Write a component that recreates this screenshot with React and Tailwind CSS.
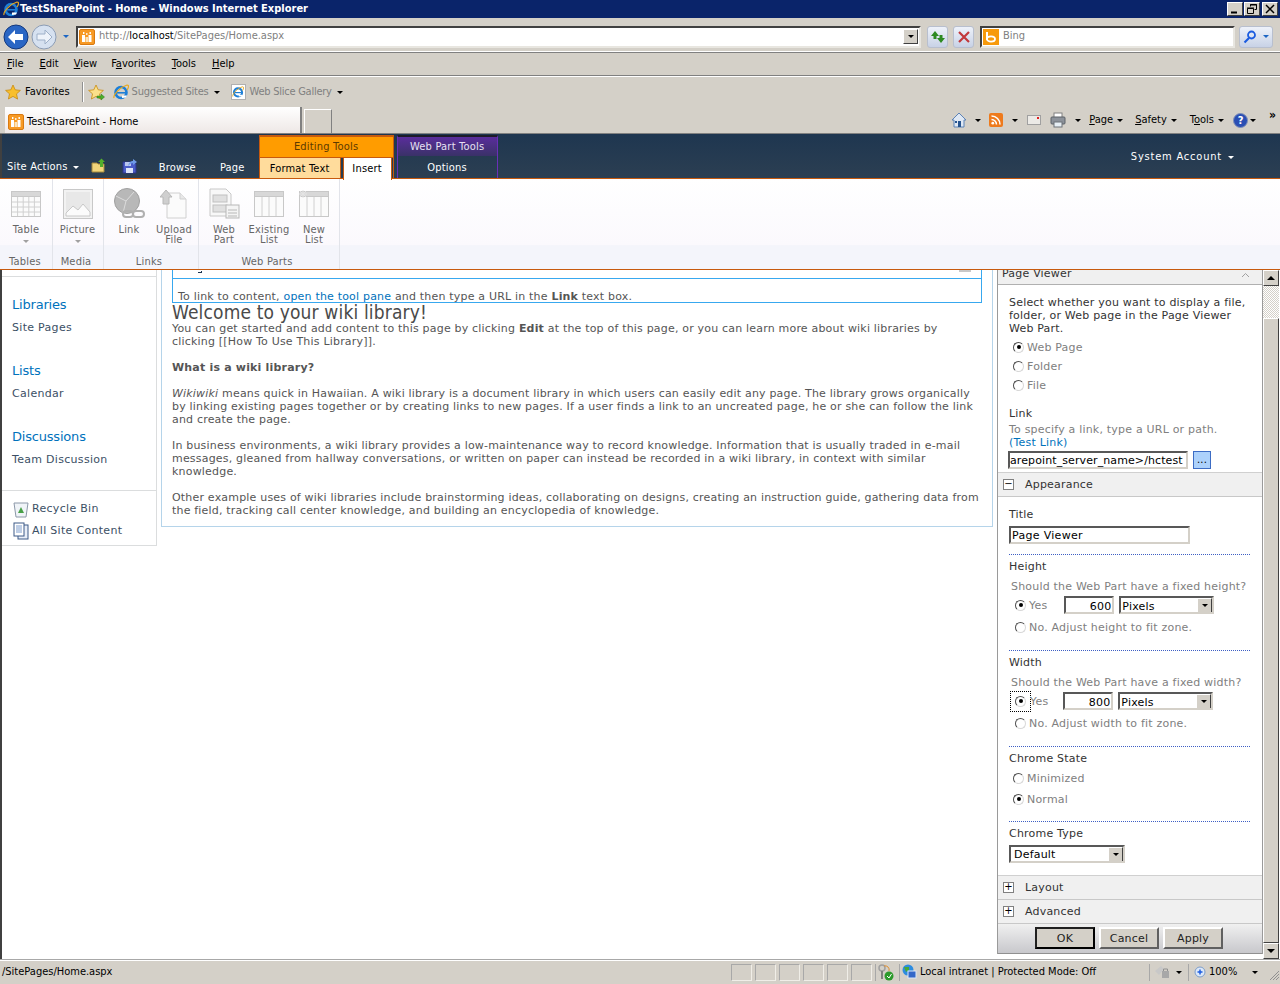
const ui = { fontFamily: '"DejaVu Sans Condensed", "Liberation Sans", sans-serif' };

function IeLogo({ size = 16 }) {
  return (
    <svg width={size} height={size} viewBox="0 0 16 16" className="shrink-0">
      <circle cx="8" cy="8.5" r="5.5" fill="none" stroke="#1d7fd8" strokeWidth="2.6" />
      <path d="M3 8h10v1.6H3z" fill="#1d7fd8" />
      <path d="M9 11.5h5l-1 2-4 .5z" fill="#fff" />
      <path d="M1 14c-1-3 6-11 13-13 2 0 2 2 0 5" fill="none" stroke="#e8a81c" strokeWidth="1.2" />
    </svg>
  );
}

function SiteIcon() {
  return (
    <svg width="16" height="16" viewBox="0 0 16 16" className="shrink-0">
      <rect x="0.5" y="0.5" width="15" height="15" rx="1.5" fill="#f79a24" stroke="#d97a10" />
      <rect x="3" y="6" width="3" height="7" fill="#fff" />
      <rect x="9.5" y="6" width="3" height="7" fill="#fff" />
      <rect x="6.5" y="8" width="2.5" height="5" fill="#fde3b8" />
      <rect x="4" y="3" width="1.4" height="2" fill="#fff" />
      <rect x="10.5" y="3" width="1.4" height="2" fill="#fff" />
      <rect x="7.2" y="4" width="1.2" height="2" fill="#fff" />
    </svg>
  );
}

function StarIcon({ add }) {
  return (
    <svg width="17" height="17" viewBox="0 0 17 17" className="shrink-0">
      <path d="M8 1l2.2 4.8 5.2.6-3.9 3.5 1.1 5.2L8 12.4 3.4 15l1.1-5.2L.6 6.4l5.2-.6z" fill={add ? "#fbe08a" : "#f8bf2c"} stroke="#c88a12" strokeWidth="0.8" />
      {add && <path d="M9 12h4v-2l3.5 3-3.5 3v-2H9z" fill="#4caf2a" stroke="#2d7a14" strokeWidth="0.5" />}
    </svg>
  );
}

function Caret({ color = "#000" }) {
  return <span className="block w-0 h-0 border-x-[3px] border-x-transparent border-t-[3px]" style={{ borderTopColor: color }} />;
}

function ComboArrow() {
  return (
    <span className="w-[15px] h-[15px] bg-[#d4d0c8] border border-t-white border-l-white border-r-[#404040] border-b-[#404040] flex items-center justify-center shrink-0">
      <Caret />
    </span>
  );
}

function WinBtn({ children, ml }) {
  return (
    <span className="w-[16px] h-[14px] bg-[#d4d0c8] border border-t-white border-l-white border-r-[#404040] border-b-[#404040] flex items-center justify-center" style={{ marginLeft: ml }}>
      {children}
    </span>
  );
}

function TitleBar() {
  return (
    <div className="h-[18px] bg-[#0a246a] flex items-center pl-[3px] pr-[2px]">
      <IeLogo />
      <span className="ml-[1px] text-white font-bold text-[11px] whitespace-nowrap" style={ui}>
        TestSharePoint - Home - Windows Internet Explorer
      </span>
      <div className="ml-auto flex">
        <WinBtn><svg width="10" height="10" viewBox="0 0 10 10"><path d="M1 8.500h6" stroke="#000" strokeWidth="2" /></svg></WinBtn>
        <WinBtn ml={1}><svg width="10" height="10" viewBox="0 0 10 10"><path d="M3.500 2.500v-2h6v5h-2M0.500 4.500h6v5h-6z" fill="none" stroke="#000" /><path d="M3 1h7M0 4h7" stroke="#000" /></svg></WinBtn>
        <WinBtn ml={2}><svg width="10" height="10" viewBox="0 0 10 10"><path d="M1 1l8 8M9 1L1 9" stroke="#000" strokeWidth="1.500" /></svg></WinBtn>
      </div>
    </div>
  );
}

function NavBall({ left, dim }) {
  return (
    <svg width="26" height="26" viewBox="0 0 26 26" className="shrink-0">
      <circle cx="13" cy="13" r="12" fill={dim ? "#d6e1f0" : "#2a66c4"} stroke={dim ? "#8c9cb4" : "#14387c"} />
      <path d={left ? "M5 13l7-7v4h8v6h-8v4z" : "M21 13l-7-7v4H6v6h8v4z"} fill={dim ? "#eef3fa" : "#fff"} stroke={dim ? "#9eb0c8" : "none"} />
    </svg>
  );
}

function SmallToolBtn({ children }) {
  return (
    <span className="w-[21px] h-[22px] rounded-[3px] bg-gradient-to-b from-[#eef2fa] to-[#c8d2e6] border border-[#b8bfce] flex items-center justify-center shrink-0">
      {children}
    </span>
  );
}

function AddressBar() {
  return (
    <div className="h-[34px] bg-[#d4d0c8] border-b border-b-white shadow-[0_1px_0_#808080] flex items-center pl-[3px] pt-[4px]">
      <NavBall left />
      <span className="ml-[2px]"><NavBall dim /></span>
      <span className="ml-[6px]"><Caret color="#1c66c4" /></span>
      <div className="ml-[7px] w-[845px] h-[22px] bg-white border-2 border-t-[#404040] border-l-[#404040] border-r-[#e8e6e0] border-b-[#e8e6e0] flex items-center px-[1px]">
        <SiteIcon />
        <span className="ml-[4px] text-[11px] text-[#808080] whitespace-nowrap" style={ui}>
          http://<span className="text-black">localhost</span>/SitePages/Home.aspx
        </span>
        <span className="ml-auto"><ComboArrow /></span>
      </div>
      <div className="ml-[6px] flex gap-[5px]">
        <SmallToolBtn>
          <svg width="16" height="14" viewBox="0 0 16 14"><path d="M5 1L1 6h2.500v3H6.500V6H9z" fill="#2d8a22" /><path d="M11 13l4-5h-2.500V5H9.500v3H7z" fill="#2d8a22" /></svg>
        </SmallToolBtn>
        <SmallToolBtn>
          <svg width="12" height="12" viewBox="0 0 12 12"><path d="M1 1l10 10M11 1L1 11" stroke="#c2383c" strokeWidth="2.2" /></svg>
        </SmallToolBtn>
      </div>
      <div className="ml-[6px] w-[255px] h-[22px] bg-white border-2 border-t-[#404040] border-l-[#404040] border-r-[#e8e6e0] border-b-[#e8e6e0] flex items-center pl-[1px]">
        <span className="w-[16px] h-[16px] bg-[#f79a0c] flex items-center justify-center">
          <svg width="12" height="12" viewBox="0 0 12 12"><path d="M2 1v8" stroke="#fff" strokeWidth="2" /><ellipse cx="6" cy="8" rx="4" ry="2.600" fill="none" stroke="#fff" strokeWidth="1.800" /></svg>
        </span>
        <span className="ml-[4px] text-[11px] text-[#808080]" style={ui}>Bing</span>
      </div>
      <div className="ml-[4px] w-[34px] h-[22px] rounded-[3px] bg-gradient-to-b from-[#eef2fa] to-[#c8d2e6] border border-[#b8bfce] flex items-center">
        <span className="w-[21px] flex justify-center">
          <svg width="14" height="14" viewBox="0 0 14 14"><circle cx="8.500" cy="5" r="3.500" fill="none" stroke="#1c5ce0" strokeWidth="1.800" /><path d="M6 8l-4.500 4.500" stroke="#1c5ce0" strokeWidth="2.200" /></svg>
        </span>
        <span className="w-[12px] flex justify-center"><Caret color="#1c66c4" /></span>
      </div>
    </div>
  );
}

function MenuBar() {
  const items = [["F", "ile", 7], ["E", "dit", 16], ["V", "iew", 15], ["Favorites", "", 14], ["T", "ools", 16], ["H", "elp", 16]];
  return (
    <div className="h-[23px] bg-[#d4d0c8] flex items-center pl-[7px] pt-[1px] mt-px border-b border-b-[#808080] text-[11px] text-black" style={ui}>
      {items.map(([u, rest, gap], i) => (
        <span key={u} style={{ marginLeft: i === 0 ? 0 : gap }} className="whitespace-nowrap">
          {u === "Favorites" ? <>F<span className="underline">a</span>vorites</> : <><span className="underline">{u}</span>{rest}</>}
        </span>
      ))}
    </div>
  );
}

function FavBar() {
  return (
    <div className="h-[31px] bg-[#d4d0c8] border-t border-t-white flex items-center pl-[5px] text-[11px] whitespace-nowrap" style={ui}>
      <StarIcon />
      <span className="ml-[3px] text-black">Favorites</span>
      <span className="ml-[12px] w-[2px] h-[20px] bg-[#909090] border-r border-r-white" />
      <span className="ml-[4px]"><StarIcon add /></span>
      <span className="ml-[8px]"><IeLogo /></span>
      <span className="ml-[3px] text-[#808080] tracking-[-0.2px]">Suggested Sites</span>
      <span className="ml-[5px]"><Caret /></span>
      <span className="ml-[11px] w-[15px] h-[16px] bg-white border border-[#b0b0b0] flex items-center justify-center"><IeLogo size={12} /></span>
      <span className="ml-[4px] text-[#808080] tracking-[-0.25px]">Web Slice Gallery</span>
      <span className="ml-[5px]"><Caret /></span>
    </div>
  );
}

function CmdBar() {
  return (
    <div className="h-[27px] bg-[#d4d0c8] border-b border-b-[#808080] flex items-end pl-[5px] text-[11px] text-black whitespace-nowrap" style={ui}>
      <div className="w-[297px] h-[26px] bg-gradient-to-b from-white to-[#eee8e6] border-r-2 border-r-[#808080] flex items-center pl-[3px] pt-[4px]">
        <SiteIcon />
        <span className="ml-[3px]">TestSharePoint - Home</span>
      </div>
      <div className="ml-[2px] w-[28px] h-[24px] border border-t-white border-l-white border-r-[#808080] border-b-0" />
      <div className="ml-auto flex items-center h-[24px] pr-[4px] pb-[2px]">
        <svg width="16" height="16" viewBox="0 0 16 16"><path d="M8 1L1 8h2v7h10V8h2z" fill="#dfe8f4" stroke="#5d83b6" /><rect x="7" y="9" width="3" height="6" fill="#26548f" /><rect x="4" y="9" width="2" height="2" fill="#26548f" /></svg>
        <span className="ml-[8px]"><Caret /></span>
        <span className="ml-[8px] w-[14px] h-[14px] rounded-[2px] bg-[#ee7a1c] flex items-center justify-center">
          <svg width="10" height="10" viewBox="0 0 10 10"><circle cx="1.800" cy="8.200" r="1.400" fill="#fff" /><path d="M0.500 4.500a5 5 0 0 1 5 5M0.500 1a8.500 8.500 0 0 1 8.500 8.500" fill="none" stroke="#fff" strokeWidth="1.500" /></svg>
        </span>
        <span className="ml-[9px]"><Caret /></span>
        <span className="ml-[9px] w-[14px] h-[10px] bg-[#eceae6] border border-[#a0a0a0] relative"><span className="absolute right-[1px] top-[1px] w-[2px] h-[2px] bg-[#e02020]" /></span>
        <span className="ml-[9px]">
          <svg width="16" height="16" viewBox="0 0 16 16"><rect x="4" y="1" width="8" height="5" fill="#fff" stroke="#808080" /><rect x="1" y="5" width="14" height="7" rx="1" fill="#8c929a" stroke="#5c6268" /><rect x="4" y="10" width="8" height="5" fill="#e6eef4" stroke="#6c7278" /></svg>
        </span>
        <span className="ml-[9px]"><Caret /></span>
        <span className="ml-[8px]"><span className="underline">P</span>age</span>
        <span className="ml-[4px]"><Caret /></span>
        <span className="ml-[12px]"><span className="underline">S</span>afety</span>
        <span className="ml-[4px]"><Caret /></span>
        <span className="ml-[13px]">T<span className="underline">o</span>ols</span>
        <span className="ml-[4px]"><Caret /></span>
        <span className="ml-[9px] w-[15px] h-[15px] rounded-full bg-[#2a4fb4] border border-[#8090b8] text-white font-bold text-[11px] leading-[14px] text-center">?</span>
        <span className="ml-[2px]"><Caret /></span>
        <span className="ml-[13px] mb-[10px] text-[12px] font-bold leading-none">»</span>
      </div>
    </div>
  );
}

function RibbonTabs() {
  return (
    <div className="h-[45px] bg-gradient-to-b from-[#1e3650] to-[#2c3f52] flex items-end text-[11px] tracking-[0.2px] text-white whitespace-nowrap" style={ui}>
      <div className="w-[2px] h-full bg-[#404040]" />
      <div className="flex items-center h-[22px] pl-[5px] mb-[1px]">
        Site Actions<span className="ml-[5px]"><Caret color="#fff" /></span>
      </div>
      <span className="ml-[12px] mb-[5px]">
        <svg width="16" height="16" viewBox="0 0 16 16"><path d="M1 5h5l1 1h6v8H1z" fill="#f2d67a" stroke="#a48a3c" /><path d="M9 9V4H7l3.500-3.500L14 4h-2v5z" fill="#52ae2c" /></svg>
      </span>
      <span className="ml-[15px] mb-[5px]">
        <svg width="16" height="16" viewBox="0 0 16 16"><path d="M1 4h11l2 2v9H1z" fill="#4a5cc8" stroke="#2a3488" /><rect x="4" y="10" width="7" height="5" fill="#dce4f8" /><rect x="3" y="4" width="6" height="4" fill="#b8c6f0" /><path d="M6 8c1-4 3-5 5-5V1l4 3-4 3V5c-2 0-3 1-5 3z" fill="#6e9ae8" /></svg>
      </span>
      <span className="ml-[21px] h-[22px] leading-[22px]">Browse</span>
      <span className="ml-[24px] h-[22px] leading-[22px]">Page</span>
      <div className="ml-[14px] w-[135px] h-[44px] border-t-2 border-x border-[#c75a0e] flex flex-col">
        <div className="h-[20px] bg-[#ff9c00] text-[#5c3a00] text-center leading-[19px]">Editing Tools</div>
        <div className="flex-1 flex border-t border-t-[#c75a0e]">
          <div className="w-[81px] bg-[#ffdc9c] text-black text-center leading-[21px] border-r border-r-[#c75a0e]">Format Text</div>
          <div className="ml-[2px] w-[49px] bg-white text-black text-center leading-[21px] border-x border-x-[#c75a0e] relative z-10 -mb-[1px]">Insert</div>
        </div>
      </div>
      <div className="ml-[3px] w-[101px] h-[44px] border-t-2 border-x border-t-[#1c1c28] border-x-[#6a2fb8] flex flex-col">
        <div className="h-[20px] bg-gradient-to-b from-[#5a2c9c] to-[#3a3168] text-[#e8e0f4] text-center leading-[19px]">Web Part Tools</div>
        <div className="flex-1 text-center leading-[23px]">Options</div>
      </div>
      <div className="ml-auto self-center pr-[46px] pt-[2px] flex items-center">
        <span className="tracking-[0.8px]">System Account</span><span className="ml-[6px]"><Caret color="#fff" /></span>
      </div>
    </div>
  );
}

function RibbonBtn({ w, icon, label, line2, caret }) {
  return (
    <div className="flex flex-col items-center shrink-0" style={{ width: w }}>
      <div className="h-[33px] shrink-0 flex items-center justify-center">{icon}</div>
      <div className="mt-[5px] shrink-0 text-center leading-[10px] text-[#666] whitespace-nowrap">
        {label}
        {line2 && <div>{line2}</div>}
      </div>
      {caret && <span className="mt-[5px] shrink-0"><Caret color="#a0a0a0" /></span>}
    </div>
  );
}

function GridIcon({ cols = 4, rows = 3, spark }) {
  const vs = Array.from({ length: cols - 1 }, (_, i) => 1 + ((i + 1) * 28) / cols);
  const hs = Array.from({ length: rows - 1 }, (_, i) => 7 + ((i + 1) * 20) / rows);
  return (
    <svg width="30" height="28" viewBox="0 0 30 28">
      <rect x="0.500" y="1.500" width="29" height="25" fill="#fbfbfb" stroke="#c8c8c8" />
      <rect x="0.500" y="1.500" width="29" height="5" fill="#d8d8d8" stroke="#c8c8c8" />
      {vs.map((x) => <path key={x} d={`M${x} 7v19`} stroke="#d0d0d0" />)}
      {hs.map((y) => <path key={y} d={`M1 ${y}h28`} stroke="#d0d0d0" />)}
      {spark && <path d="M4 0v8M0 4h8M1 1l6 6M7 1L1 7" stroke="#e4e4e4" strokeWidth="1" />}
    </svg>
  );
}

function Group({ w, label, children }) {
  return (
    <div className="flex flex-col border-r border-r-[#e2e4ea] shrink-0" style={{ width: w }}>
      <div className="h-[66px] flex pt-[8px]">{children}</div>
      <div className="h-[23px] pt-[10px] pr-[4px] leading-[14px] text-center text-[#666]">{label}</div>
    </div>
  );
}

function Ribbon() {
  return (
    <div className="h-[92px] -mt-px border-y border-y-[#c75a0e] bg-[linear-gradient(#fff_0,#fbf9fd_73%,#f4f5fb_74%,#f4f5fb_100%)] flex pl-[2px] text-[11px] tracking-[0.2px]" style={ui}>
      <Group w={51} label="Tables">
        <RibbonBtn w={48} icon={<GridIcon cols={5} rows={4} />} label="Table" caret />
      </Group>
      <Group w={51} label="Media">
        <RibbonBtn w={49} caret label="Picture" icon={
          <svg width="30" height="30" viewBox="0 0 30 30"><rect x="0.500" y="0.500" width="29" height="29" fill="#f2f2f2" stroke="#c8c8c8" /><rect x="3" y="3" width="24" height="24" fill="#e8e8e8" /><path d="M3 24l7-7 5 4 5-6 7 8v4H3z" fill="#fbfbfb" stroke="#c8c8c8" /></svg>
        } />
      </Group>
      <Group w={95} label="Links">
        <RibbonBtn w={50} label="Link" icon={
          <svg width="32" height="32" viewBox="0 0 32 32"><circle cx="14" cy="13" r="12.500" fill="#b8b8b8" stroke="#a0a0a0" /><path d="M3 8l10 5 8-9M13 13l-3 12" stroke="#dcdcdc" fill="none" /><rect x="10" y="23" width="10" height="6" rx="3" fill="none" stroke="#b0b0b0" strokeWidth="2" /><rect x="20" y="23" width="11" height="6" rx="3" fill="none" stroke="#b0b0b0" strokeWidth="2" /></svg>
        } />
        <RibbonBtn w={40} label="Upload" line2="File" icon={
          <svg width="28" height="30" viewBox="0 0 28 30"><path d="M7 4h13l6 6v19H7z" fill="#fbfbfb" stroke="#d0d0d0" /><path d="M20 4v6h6" fill="#e8e8e8" stroke="#d0d0d0" /><path d="M0 8l6-7 6 7H9v7H3V8z" fill="#cfcfcf" stroke="#b8b8b8" /></svg>
        } />
      </Group>
      <Group w={141} label="Web Parts">
        <RibbonBtn w={50} label="Web" line2="Part" icon={
          <svg width="31" height="31" viewBox="0 0 31 31"><path d="M1 1h16l5 5v22H1z" fill="#f8f8f8" stroke="#c8c8c8" /><rect x="4" y="7" width="14" height="7" fill="#e0e0e0" stroke="#c0c0c0" /><rect x="4" y="17" width="14" height="7" fill="#e0e0e0" stroke="#c0c0c0" /><rect x="17" y="17" width="13" height="13" fill="#f4f4f4" stroke="#b8b8b8" /><path d="M19 22h9M19 25h9M19 28h9" stroke="#b8b8b8" /></svg>
        } />
        <RibbonBtn w={40} label="Existing" line2="List" icon={<GridIcon cols={4} rows={1} />} />
        <RibbonBtn w={50} label="New" line2="List" icon={<GridIcon cols={4} rows={1} spark />} />
      </Group>
    </div>
  );
}

function NavLink({ head, sub, mt }) {
  return (
    <div style={{ marginTop: mt }}>
      <div className="text-[13px] leading-[16px] tracking-[-0.2px] text-[#0072bc]">{head}</div>
      <div className="mt-[7px] text-[11px] leading-[16px] tracking-[0.3px] text-[#3b4f65]">{sub}</div>
    </div>
  );
}

function LeftNav() {
  return (
    <div className="w-[155px] h-[276px] shrink-0 border-r border-b border-[#dbddde] tracking-[0.3px] whitespace-nowrap">
      <div className="h-[7px] border-b border-b-[#dbddde]" />
      <div className="pl-[10px]">
        <NavLink head="Libraries" sub="Site Pages" mt={20} />
        <NavLink head="Lists" sub="Calendar" mt={27} />
        <NavLink head="Discussions" sub="Team Discussion" mt={27} />
      </div>
      <div className="mt-[22px] border-t border-t-[#dbddde] pt-[8px] pl-[11px] text-[11px] text-[#3b4f65]">
        <div className="flex items-center h-[20px]">
          <svg width="16" height="18" viewBox="0 0 16 18"><path d="M1 3h14l-2 14H3z" fill="#f0f4f8" stroke="#8c98a8" /><path d="M8 7l3 6H5z" fill="#48a048" /></svg>
          <span className="ml-[3px]">Recycle Bin</span>
        </div>
        <div className="mt-[2px] flex items-center h-[20px]">
          <svg width="16" height="18" viewBox="0 0 16 18"><rect x="5" y="3" width="10" height="14" fill="#e8eef8" stroke="#3c5a88" /><rect x="1" y="1" width="10" height="13" fill="#fff" stroke="#3c5a88" /><path d="M3 4h6M3 6h6M3 8h6M3 10h6" stroke="#7c9ccc" /></svg>
          <span className="ml-[3px]">All Site Content</span>
        </div>
      </div>
    </div>
  );
}

function Para({ lines, mt = 0 }) {
  return (
    <div style={{ marginTop: mt }}>
      {lines.map((l, i) => <div key={i} className="h-[13px] whitespace-nowrap">{l}</div>)}
    </div>
  );
}

function WikiBody() {
  return (
    <div className="ml-[4px] w-[832px] h-[257px] shrink-0 border-x border-b border-[#b5d4ea] pl-[10px] text-[11px] leading-[13px] text-[#555] tracking-[0.19px]">
      <div className="w-[810px] h-[33px] border-x border-b border-[#38a8ef] relative">
        <div className="h-[9px] border-b border-b-[#38a8ef]" />
        <span className="absolute left-[25px] top-[1px] w-[4px] h-[2px] border-r border-b border-[#1c3450]" />
        <span className="absolute left-[786px] top-0 w-[12px] h-[2px] bg-[#c8c8c8]" />
        <div className="absolute left-[5px] bottom-[-2px] h-[14px] whitespace-nowrap">
          To link to content, <span className="text-[#0072bc]">open the tool pane</span> and then type a URL in the <b>Link</b> text box.
        </div>
      </div>
      <div className="text-[19px] leading-[19px] tracking-[0.15px] whitespace-nowrap text-[#4a4a4a]" style={ui}>Welcome to your wiki library!</div>
      <Para lines={[
        <>You can get started and add content to this page by clicking <b>Edit</b> at the top of this page, or you can learn more about wiki libraries by</>,
        "clicking [[How To Use This Library]].",
      ]} />
      <Para mt={13} lines={[<b>What is a wiki library?</b>]} />
      <Para mt={13} lines={[
        <><i>Wikiwiki</i> means quick in Hawaiian. A wiki library is a document library in which users can easily edit any page. The library grows organically</>,
        "by linking existing pages together or by creating links to new pages. If a user finds a link to an uncreated page, he or she can follow the link",
        "and create the page.",
      ]} />
      <Para mt={13} lines={[
        "In business environments, a wiki library provides a low-maintenance way to record knowledge. Information that is usually traded in e-mail",
        "messages, gleaned from hallway conversations, or written on paper can instead be recorded in a wiki library, in context with similar",
        "knowledge.",
      ]} />
      <Para mt={13} lines={[
        "Other example uses of wiki libraries include brainstorming ideas, collaborating on designs, creating an instruction guide, gathering data from",
        "the field, tracking call center knowledge, and building an encyclopedia of knowledge.",
      ]} />
    </div>
  );
}

function Radio({ on, focus, label, x = 0, mt = 0 }) {
  return (
    <div className="h-[14px] flex items-center text-[#808080] whitespace-nowrap" style={{ marginLeft: x, marginTop: mt }}>
      <span className={focus ? "w-[19px] h-[19px] -ml-[4px] -mr-[3px] outline-1 outline-dotted outline-black flex items-center justify-center shrink-0" : "shrink-0"}>
        <span className="w-[11px] h-[11px] rounded-full block bg-white border border-t-[#505050] border-l-[#505050] border-r-[#d8d8d8] border-b-[#d8d8d8] relative">
          {on && <span className="absolute left-[2.500px] top-[2.500px] w-[4px] h-[4px] rounded-full bg-black" />}
        </span>
      </span>
      <span className="ml-[3px]">{label}</span>
    </div>
  );
}

function Sunken({ w, h = 17, right, children, mt, ml }) {
  return (
    <div className="shrink-0 bg-white border-2 border-t-[#585858] border-l-[#585858] border-r-[#d4d0c8] border-b-[#d4d0c8] flex items-center overflow-hidden text-black whitespace-nowrap" style={{ width: w, height: h, marginTop: mt, marginLeft: ml, justifyContent: right ? "flex-end" : "flex-start" }}>
      {children}
    </div>
  );
}

function SizeRow({ val, mt, ml }) {
  return (
    <div className="flex items-center" style={{ marginTop: mt, marginLeft: ml }}>
      <Sunken w={50} h={18} right><span className="pr-px mt-[2px]">{val}</span></Sunken>
      <Sunken w={95} h={18} ml={5}>
        <span className="pl-[1px] mt-[2px]">Pixels</span><span className="ml-auto"><ComboArrow /></span>
      </Sunken>
    </div>
  );
}

function Dots({ mt }) {
  return <div className="mx-[11px] w-[241px] border-t border-dotted border-t-[#3e5fc4]" style={{ marginTop: mt }} />;
}

function Head({ children, mt }) {
  return <div className="h-[14px] leading-[14px] ml-[11px] text-[#333]" style={{ marginTop: mt }}>{children}</div>;
}

function PaneRow({ sign, label, h = 24 }) {
  return (
    <div className="bg-[#f0f0f0] border-b border-b-[#c8c8c8] flex items-center pl-[5px] text-[#333]" style={{ height: h }}>
      <span className="w-[11px] h-[11px] border border-[#808080] bg-white text-[10px] leading-[8px] text-center text-black shrink-0" style={{ fontFamily: '"DejaVu Sans", sans-serif' }}>{sign}</span>
      <span className="ml-[11px]">{label}</span>
    </div>
  );
}

function ClassicBtn({ label, def }) {
  return (
    <div className={def ? "w-[60px] h-[22px] bg-[#d4d0c8] border-2 border-t-[#202020] border-l-[#202020] border-r-[#000] border-b-[#000] text-center leading-[19px] text-[#222]" : "w-[60px] h-[22px] bg-[#d4d0c8] border-2 border-t-white border-l-white border-r-[#606060] border-b-[#606060] text-center leading-[19px] text-[#222]"}>
      {label}
    </div>
  );
}

function ToolPane() {
  return (
    <div className="ml-[4px] w-[266px] shrink-0 self-start border-x border-x-[#9a9a9a] text-[11px] leading-[13px] tracking-[0.2px]">
      <div className="h-[15px] bg-[#f0f0f0] border-b border-b-[#b0b0b0] flex items-end pl-[4px] pr-[13px] overflow-hidden text-[#333]">
        <span className="mb-[4px]">Page Viewer</span>
        <svg className="ml-auto mb-[7px]" width="7" height="4" viewBox="0 0 7 4"><path d="M0 4l3.500-3.500L7 4" fill="none" stroke="#a0a0a0" /></svg>
      </div>
      <div className="pl-[11px] pt-[11px] text-[#333] whitespace-nowrap">
        <div className="h-[13px]">Select whether you want to display a file,</div>
        <div className="h-[13px]">folder, or Web page in the Page Viewer</div>
        <div className="h-[13px]">Web Part.</div>
      </div>
      <Radio on label="Web Page" x={15} mt={5} />
      <Radio label="Folder" x={15} mt={5} />
      <Radio label="File" x={15} mt={5} />
      <Head mt={15}>Link</Head>
      <div className="ml-[11px] mt-[2px] h-[13px] text-[#808080] whitespace-nowrap">To specify a link, type a URL or path.</div>
      <div className="ml-[11px] h-[13px] text-[#0072bc]">(Test Link)</div>
      <div className="ml-[10px] mt-[2px] flex items-center">
        <Sunken w={180} h={18}>
          <span className="tracking-[0.1px]">arepoint_server_name&gt;/hctest</span>
        </Sunken>
        <span className="ml-[5px] w-[18px] h-[18px] bg-[#acd1fb] border border-[#3c6cc4] text-black text-[10px] text-center leading-[16px]">...</span>
      </div>
      <div className="mt-[3px] border-t border-t-[#d0d0d0]"><PaneRow sign="−" label="Appearance" h={24} /></div>
      <Head mt={11}>Title</Head>
      <div className="ml-[11px]"><Sunken w={181} h={18} mt={4}><span className="pl-[1px] tracking-[0.3px]">Page Viewer</span></Sunken></div>
      <Dots mt={10} />
      <Head mt={5}>Height</Head>
      <div className="ml-[13px] mt-[6px] h-[14px] text-[#808080] whitespace-nowrap">Should the Web Part have a fixed height?</div>
      <div className="flex items-center mt-[2px]">
        <Radio on label="Yes" x={17} />
        <SizeRow val="600" ml={17} />
      </div>
      <Radio label="No. Adjust height to fit zone." x={17} mt={6} />
      <Dots mt={16} />
      <Head mt={5}>Width</Head>
      <div className="ml-[13px] mt-[6px] h-[14px] text-[#808080] whitespace-nowrap">Should the Web Part have a fixed width?</div>
      <div className="flex items-center mt-[2px]">
        <Radio on focus label="Yes" x={17} />
        <SizeRow val="800" ml={15} />
      </div>
      <Radio label="No. Adjust width to fit zone." x={17} mt={6} />
      <Dots mt={16} />
      <Head mt={5}>Chrome State</Head>
      <Radio label="Minimized" x={15} mt={5} />
      <Radio on label="Normal" x={15} mt={7} />
      <Dots mt={15} />
      <Head mt={5}>Chrome Type</Head>
      <div className="ml-[11px]">
        <Sunken w={116} h={18} mt={4}><span className="pl-[3px]">Default</span><span className="ml-auto"><ComboArrow /></span></Sunken>
      </div>
      <div className="mt-[12px] border-t border-t-[#d0d0d0]"><PaneRow sign="+" label="Layout" /></div>
      <PaneRow sign="+" label="Advanced" />
      <div className="h-[30px] bg-gradient-to-b from-[#f0f0f0] to-[#c8c8cc] border-b border-b-[#909090] flex justify-center gap-[4px] pt-[3px] pr-[2px]">
        <ClassicBtn label="OK" def />
        <ClassicBtn label="Cancel" />
        <ClassicBtn label="Apply" />
      </div>
    </div>
  );
}

function ScrollBtn({ down }) {
  return (
    <div className="h-[16px] shrink-0 bg-[#d4d0c8] border border-t-white border-l-white border-r-[#404040] border-b-[#404040] flex items-center justify-center">
      <span className={down ? "w-0 h-0 border-x-[4px] border-x-transparent border-t-[4px] border-t-black" : "w-0 h-0 border-x-[4px] border-x-transparent border-b-[4px] border-b-black"} />
    </div>
  );
}

function Scrollbar() {
  return (
    <div className="w-[16px] shrink-0 h-full flex flex-col">
      <ScrollBtn />
      <div className="h-[32px] shrink-0 bg-[repeating-conic-gradient(#d4d0c8_0_25%,#fff_0_50%)] bg-[length:2px_2px]" />
      <div className="flex-1 bg-[#d4d0c8] border border-t-white border-l-white border-r-[#404040] border-b-[#404040]" />
      <ScrollBtn down />
    </div>
  );
}

function StatusBar() {
  const cells = [0, 1, 2, 3, 4, 5];
  return (
    <div className="flex-1 bg-[#d4d0c8] border-t border-t-[#a8a8a8] shadow-[inset_0_1px_0_#fff] flex items-center text-[11px] text-black whitespace-nowrap" style={ui}>
      <span className="pl-[2px] w-[731px] shrink-0">/SitePages/Home.aspx</span>
      {cells.map((i) => <span key={i} className="w-[21px] h-[17px] mr-[3px] border border-t-[#a8a8a8] border-l-[#a8a8a8] border-r-[#f0eee8] border-b-[#f0eee8] shrink-0" />)}
      <span className="w-[21px] h-[17px] mr-[3px] shrink-0 flex items-center justify-center border-l border-l-[#a8a8a8]">
        <svg width="18" height="17" viewBox="0 0 18 17"><circle cx="5" cy="4" r="3" fill="none" stroke="#a0a0a0" strokeWidth="1.500" /><path d="M5 7v8" stroke="#808080" strokeWidth="2" /><path d="M7 2a4 4 0 0 1 5 5" fill="none" stroke="#e09030" /><circle cx="12" cy="12" r="4.500" fill="#2c9a2c" /><path d="M10 12l2 2 2.500-4" fill="none" stroke="#fff" /></svg>
      </span>
      <span className="w-[250px] h-[17px] border-l border-l-[#a8a8a8] flex items-center pl-[1px] shrink-0">
        <svg width="16" height="16" viewBox="0 0 16 16"><circle cx="7" cy="6" r="5.500" fill="#2d8ce0" /><path d="M3 3h5v3l-3 2z" fill="#48a838" /><rect x="7" y="7" width="8" height="7" fill="#3468c8" stroke="#dce8f8" /></svg>
        <span className="ml-[3px]">Local intranet | Protected Mode: Off</span>
      </span>
      <span className="w-[39px] h-[17px] border-l border-l-[#a8a8a8] flex items-center pl-[5px] gap-[6px] shrink-0">
        <svg width="15" height="14" viewBox="0 0 15 14" className="shrink-0"><path d="M0 6l6-5 3 3-5 6z" fill="#c8c8c8" /><rect x="7" y="6" width="7" height="7" fill="#a8a8a8" /><path d="M8.500 6V4h4v2" fill="none" stroke="#909090" /></svg>
        <Caret />
      </span>
      <span className="w-[77px] h-[17px] border-l border-l-[#a8a8a8] flex items-center pl-[5px] shrink-0">
        <svg width="13" height="13" viewBox="0 0 13 13" className="shrink-0"><circle cx="6" cy="6" r="5" fill="#dce8f8" stroke="#7c9cc8" /><path d="M3.500 6h5M6 3.500v5" stroke="#1c5ce0" strokeWidth="1.500" /></svg>
        <span className="ml-[2px]">100%</span>
        <span className="ml-[15px]"><Caret /></span>
      </span>
      <svg className="ml-auto self-end mb-[3px]" width="11" height="11" viewBox="0 0 11 11"><path d="M10 1L1 10M10 4l-6 6M10 7l-3 3" stroke="#909090" /></svg>
    </div>
  );
}

export default function App() {
  return (
    <div className="w-[1280px] h-[984px] overflow-hidden flex flex-col bg-white">
      <TitleBar />
      <AddressBar />
      <MenuBar />
      <FavBar />
      <CmdBar />
      <RibbonTabs />
      <Ribbon />
      <div className="h-[689px] flex bg-white border-l-2 border-l-[#404040] pr-[1px] shrink-0 overflow-hidden" style={{ fontFamily: '"DejaVu Sans", sans-serif' }}>
        <LeftNav />
        <WikiBody />
        <ToolPane />
        <Scrollbar />
      </div>
      <StatusBar />
    </div>
  );
}
